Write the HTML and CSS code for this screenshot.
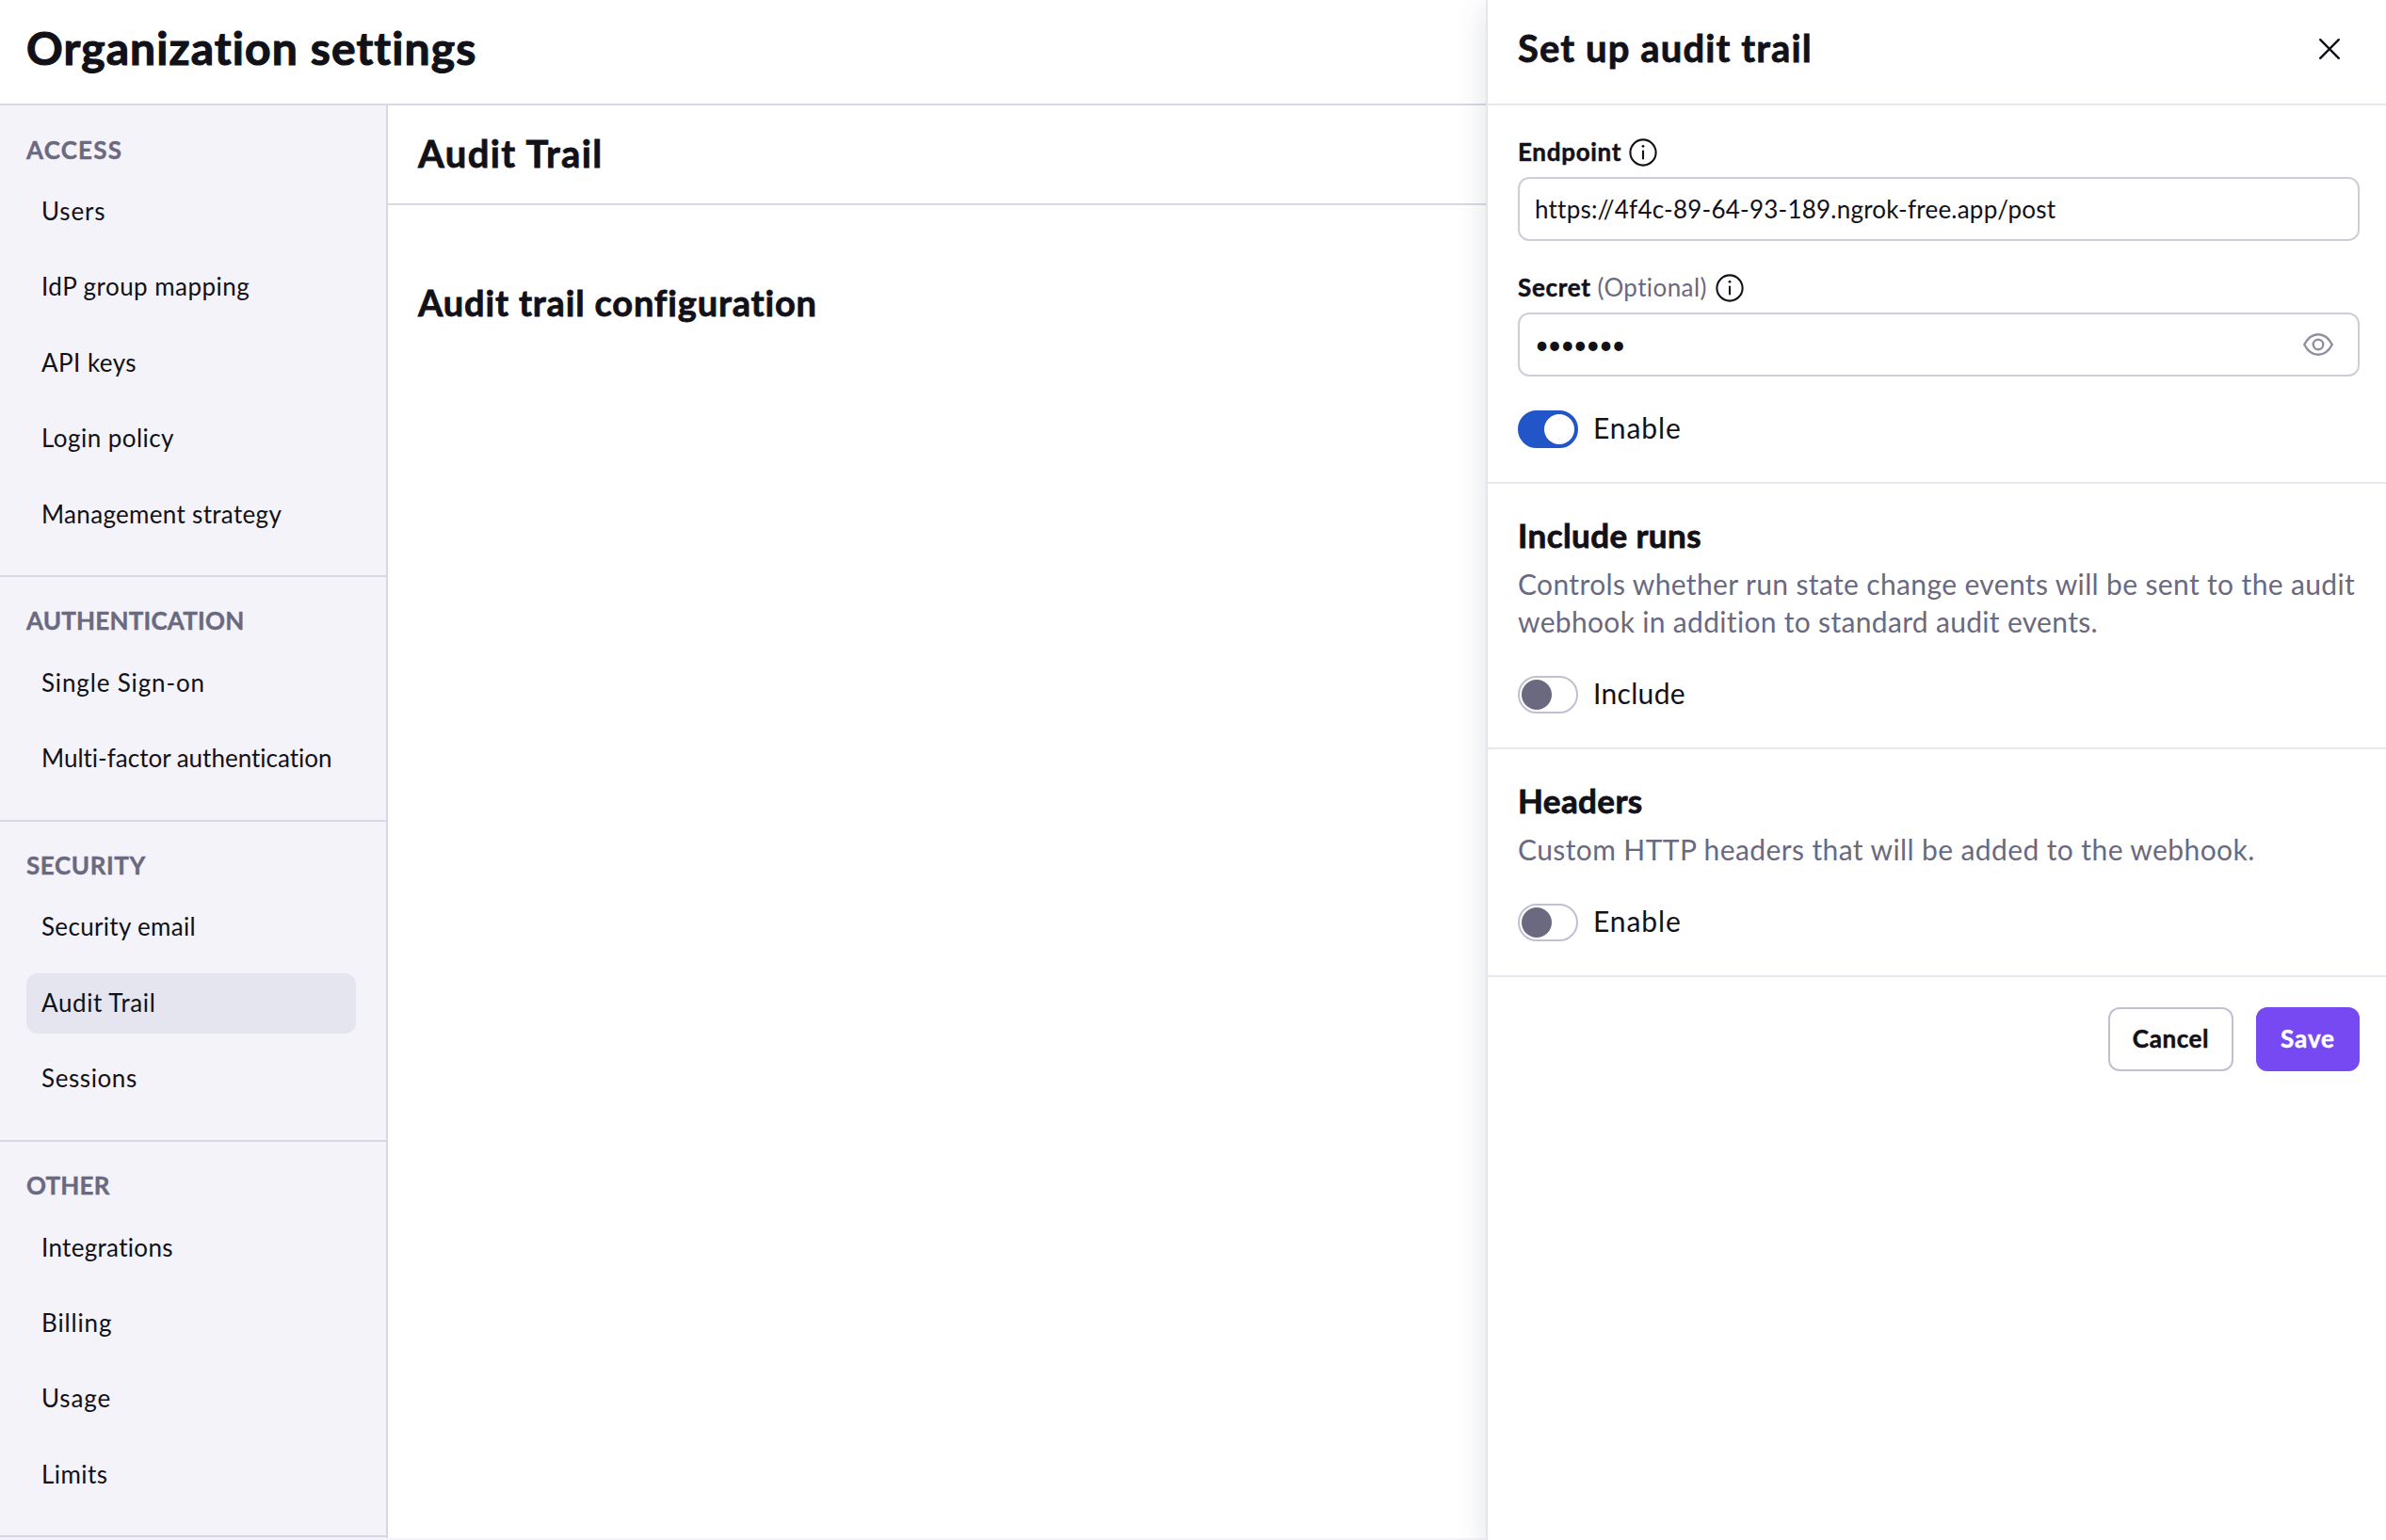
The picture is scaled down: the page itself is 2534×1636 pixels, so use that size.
FILE: index.html
```html
<!DOCTYPE html>
<html lang="en">
<head>
<meta charset="utf-8">
<title>Organization settings</title>
<link rel="stylesheet" href="styles.css">
</head>
<body>
<div class="app">
  <header class="page-head"><h1 class="page-title">Organization settings</h1></header>
  <div class="page-body">
    <nav class="sidebar">
      <section class="group">
        <h2 class="group-title track-xl">ACCESS</h2>
        <ul class="group-list">
          <li class="item track-lg">Users</li>
          <li class="item">IdP group mapping</li>
          <li class="item">API keys</li>
          <li class="item">Login policy</li>
          <li class="item track-sm">Management strategy</li>
        </ul>
      </section>
      <section class="group">
        <h2 class="group-title track-xs">AUTHENTICATION</h2>
        <ul class="group-list">
          <li class="item track-lg">Single Sign-on</li>
          <li class="item track-none">Multi-factor authentication</li>
        </ul>
      </section>
      <section class="group">
        <h2 class="group-title track-md">SECURITY</h2>
        <ul class="group-list">
          <li class="item track-sm">Security email</li>
          <li class="item item-active track-md">Audit Trail</li>
          <li class="item track-md">Sessions</li>
        </ul>
      </section>
      <section class="group">
        <h2 class="group-title track-xs">OTHER</h2>
        <ul class="group-list">
          <li class="item track-sm">Integrations</li>
          <li class="item track-lg">Billing</li>
          <li class="item track-lg">Usage</li>
          <li class="item">Limits</li>
        </ul>
      </section>
    </nav>
    <main class="content">
      <div class="content-head"><h2 class="content-title">Audit Trail</h2></div>
      <h3 class="config-title">Audit trail configuration</h3>
    </main>
  </div>
</div>

<aside class="drawer">
  <header class="drawer-head">
    <h2 class="drawer-title">Set up audit trail</h2>
    <svg class="close" viewBox="0 0 24 24"><path d="M2.2 2.2 21.8 21.8M21.8 2.2 2.2 21.8"/></svg>
  </header>
  <section class="block block-fields">
    <div class="label-row"><span class="label">Endpoint</span>
      <svg class="info" viewBox="0 0 32 32"><circle cx="16" cy="16" r="13.6"/><path d="M16 14.6V22.4"/><circle class="info-dot" cx="16" cy="9.3" r="1.4"/></svg>
    </div>
    <div class="field"><span class="value">https://4f4c-89-64-93-189.ngrok-free.app/post</span></div>
    <div class="label-row label-row-next"><span class="label">Secret</span><span class="optional">(Optional)</span>
      <svg class="info" viewBox="0 0 32 32"><circle cx="16" cy="16" r="13.6"/><path d="M16 14.6V22.4"/><circle class="info-dot" cx="16" cy="9.3" r="1.4"/></svg>
    </div>
    <div class="field"><span class="dots">•••••••</span>
      <svg class="eye" viewBox="0 0 32 24"><path d="M1.2 12C4.8 5.2 10 1.2 16 1.2S27.2 5.2 30.8 12C27.2 18.8 22 22.8 16 22.8S4.8 18.8 1.2 12Z"/><circle cx="16" cy="12" r="5.3"/></svg>
    </div>
    <div class="switch-row switch-first"><i class="switch switch-on"></i><span class="switch-label">Enable</span></div>
  </section>
  <section class="block">
    <h3 class="block-title">Include runs</h3>
    <p class="help">Controls whether run state change events will be sent to the audit<br><span class="track-sm">webhook in addition to standard audit events.</span></p>
    <div class="switch-row"><i class="switch"></i><span class="switch-label track-sm">Include</span></div>
  </section>
  <section class="block">
    <h3 class="block-title">Headers</h3>
    <p class="help help-wide">Custom HTTP headers that will be added to the webhook.</p>
    <div class="switch-row"><i class="switch"></i><span class="switch-label">Enable</span></div>
  </section>
  <footer class="actions">
    <button class="btn btn-cancel">Cancel</button>
    <button class="btn btn-save">Save</button>
  </footer>
</aside>
</body>
</html>
```
FILE: styles.css
```css
* { box-sizing: border-box; margin: 0; padding: 0; }
body {
  position: relative;
  height: 1636px;
  overflow: hidden;
  background: #f4f3f9;
  color: #121118;
  font-family: Lato, "Noto Sans", sans-serif;
  font-size: 26px;
  font-variant-ligatures: none;
}
ul { list-style: none; }
h1, h2, h3 { -webkit-text-stroke: 0.8px currentColor; }
.app { display: flex; flex-direction: column; height: 1634px; background: #fff; }
.page-head { display: flex; align-items: center; height: 112px; padding: 0 28px 9px; border-bottom: 2px solid #d9d7e6; }
.page-title { font-size: 48px; line-height: 64px; letter-spacing: 1.1px; white-space: nowrap; -webkit-text-stroke-width: 1.1px; }
.page-body { display: flex; flex: 1; min-height: 0; }
.sidebar { width: 412px; background: #f4f3f9; border-right: 2px solid #d9d7e6; }
.group { padding: 0 32px 31.9px 28px; border-bottom: 2px solid #d9d7e6; }
.group-title { display: flex; align-items: center; height: 81px; padding-top: 12px; font-size: 26px; color: #6a6980; -webkit-text-stroke-width: 0.4px; }
.group-list { display: flex; flex-direction: column; gap: 16px; }
.item { display: flex; align-items: center; height: 64.4px; padding: 0 16px 2.5px; border-radius: 12px; letter-spacing: 0.45px; white-space: nowrap; }
.item-active { background: #e5e5ef; }
.content { flex: 1; }
.content-head { display: flex; align-items: center; height: 106px; padding: 0 32px 3px; border-bottom: 2px solid #d9d7e6; }
.content-title { font-size: 40px; letter-spacing: 1.4px; }
.config-title { padding: 77px 32px 0; font-size: 38px; line-height: 52px; letter-spacing: 0.82px; }

.drawer {
  position: absolute;
  top: 0; right: 0;
  width: 956px; height: 1636px;
  background: #fff;
  border-left: 2px solid #e5e5ed;
  box-shadow: 0 8px 32px rgba(18, 24, 24, 0.13);
}
.drawer-head { display: flex; justify-content: space-between; align-items: center; height: 112px; padding: 0 48px 0 32px; border-bottom: 2px solid #e7e7ed; }
.drawer-title { padding-bottom: 8px; font-size: 40px; letter-spacing: 1.1px; }
.close { width: 24px; height: 24px; margin-bottom: 6px; fill: none; stroke: #121118; stroke-width: 2.4; stroke-linecap: round; }
.block { padding: 30px 28px 36px 32px; border-bottom: 2px solid #e7e7ed; }
.block-fields { padding-top: 34px; }
.label-row { display: flex; align-items: center; height: 32px; margin-bottom: 10px; }
.label-row-next { margin-top: 34px; }
.label { padding-bottom: 2.5px; font-weight: 700; letter-spacing: 0.7px; -webkit-text-stroke: 0.5px currentColor; }
.optional { padding-bottom: 2.5px; margin: 0 1px 0 7px; letter-spacing: 0.4px; color: #6a6980; }
.info { width: 32px; height: 32px; margin-left: 7px; fill: none; stroke: #121118; stroke-width: 2.1; stroke-linecap: round; }
.info .info-dot { fill: #121118; stroke: none; }
.field { display: flex; align-items: center; justify-content: space-between; height: 68px; padding: 0 26px 0 16px; border: 2px solid #cfced8; border-radius: 12px; }
.value { padding-bottom: 0.5px; letter-spacing: 0.22px; white-space: nowrap; }
.dots { letter-spacing: -1.5px; }
.eye { width: 32px; height: 24px; fill: none; stroke: #8f8fa0; stroke-width: 2.4; stroke-linejoin: round; }
.switch-row { display: flex; align-items: center; gap: 16px; height: 40px; margin-top: 38px; }
.switch-first { margin-top: 36px; }
.switch { display: flex; align-items: center; width: 64px; height: 40px; padding: 0 2px; border: 2px solid #c2bfd1; border-radius: 20px; }
.switch::before { content: ""; width: 32px; height: 32px; border-radius: 50%; background: #6a6980; }
.switch-on { justify-content: flex-end; border-color: #2255c7; background: #2255c7; }
.switch-on::before { background: #fff; }
.switch-label { padding-bottom: 5px; font-size: 30px; letter-spacing: 0.9px; }
.block-title { font-size: 35px; line-height: 48px; letter-spacing: 0.4px; }
.help { margin-top: 8px; font-size: 30px; line-height: 40px; letter-spacing: 0.36px; color: #6a6980; white-space: nowrap; }
.help-wide { letter-spacing: 0.4px; }
.actions { display: flex; justify-content: flex-end; gap: 24px; padding: 32px 28px 0; }
.btn { height: 68px; padding-bottom: 2.5px; border: 2px solid #c2bfd1; border-radius: 12px; background: #fff; color: #121118; font: 700 26px Lato, sans-serif; letter-spacing: 0.6px; -webkit-text-stroke: 0.5px currentColor; }
.btn-cancel { width: 133px; }
.btn-save { width: 110px; border-color: #7649f2; background: #7649f2; color: #fff; letter-spacing: 0.9px; }

.track-none { letter-spacing: 0; }
.track-xs { letter-spacing: 0.2px; }
.track-sm { letter-spacing: 0.32px; }
.track-md { letter-spacing: 0.6px; }
.track-lg { letter-spacing: 0.85px; }
.track-xl { letter-spacing: 1.2px; }
```
